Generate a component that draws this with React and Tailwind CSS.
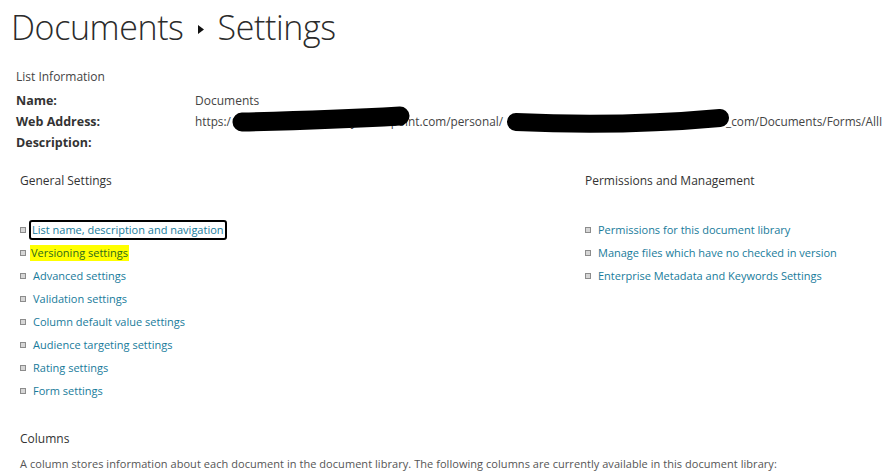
import React from 'react'

const font = { fontFamily: '"Open Sans", "Noto Sans", sans-serif' }

const generalLinks = [
  'List name, description and navigation',
  'Versioning settings',
  'Advanced settings',
  'Validation settings',
  'Column default value settings',
  'Audience targeting settings',
  'Rating settings',
  'Form settings',
]

const permissionLinks = [
  'Permissions for this document library',
  'Manage files which have no checked in version',
  'Enterprise Metadata and Keywords Settings',
]

function Bullet() {
  return <span className="inline-block w-[6px] h-[6px] border border-[#8c8c8c] bg-[#d6d6d6] shrink-0" />
}

function LinkRow({ text, i }) {
  let cls = 'px-[1px] leading-[16px] whitespace-nowrap'
  if (i === 0) cls += ' border-2 border-black rounded-[3px] -ml-[3px] px-[1px]'
  if (i === 1) cls += ' bg-[#ffff00] text-[#2d6a1c] -ml-[2px] px-[1px]'
  return (
    <li className="flex items-center gap-[6px] h-[23px]">
      <Bullet />
      <a className={cls}>{text}</a>
    </li>
  )
}

export default function App() {
  return (
    <div className="relative w-[882px] h-[472px] overflow-hidden bg-white text-[11px] text-[#444]" style={font}>
      <h1 className="flex items-center pl-[11px] pt-[2px] h-[52px] text-[34px] font-light text-[#2b2b2b] tracking-[-0.4px]">
        <span>Documents</span>
        <svg width="6" height="9" viewBox="0 0 6 9" className="ml-[14px] mr-[14px] mt-[4px]">
          <path d="M0 0 L6 4.5 L0 9 Z" fill="#111" />
        </svg>
        <span>Settings</span>
      </h1>

      <div className="pl-[16px] pt-[15px]">
        <div className="h-[20px] leading-[20px] text-[12px] text-[#444]">List Information</div>
        <div className="grid grid-cols-[179px_1fr] mt-[3px] leading-[21px] whitespace-nowrap text-[12px]">
          <div className="font-bold text-[12.5px] text-[#333]">Name:</div>
          <div>Documents</div>
          <div className="font-bold text-[12.5px] text-[#333]">Web Address:</div>
          <div className="flex overflow-hidden text-[11.8px]">
            <span className="flex justify-between w-[308px] shrink-0">
              <span>https:/</span>
              <span>y.sharepoint.com/personal/</span>
            </span>
            <span className="w-[223px] shrink-0" />
            <span>_com/Documents/Forms/AllItems.aspx</span>
          </div>
          <div className="font-bold text-[12.5px] text-[#333]">Description:</div>
          <div />
        </div>
      </div>

      <div className="grid grid-cols-[565px_1fr] pl-[20px] pt-[18px]">
        <div>
          <div className="h-[20px] leading-[20px] text-[12px] text-[#333]">General Settings</div>
          <ul className="mt-[27px] text-[#177b9b]">
            {generalLinks.map((t, i) => (
              <LinkRow key={t} text={t} i={i} />
            ))}
          </ul>
        </div>
        <div>
          <div className="h-[20px] leading-[20px] text-[12px] text-[#333]">Permissions and Management</div>
          <ul className="mt-[27px] text-[#177b9b]">
            {permissionLinks.map((t) => (
              <LinkRow key={t} text={t} i={-1} />
            ))}
          </ul>
        </div>
      </div>

      <div className="pl-[20px] pt-[27px]">
        <div className="h-[20px] leading-[20px] text-[12px] text-[#333]">Columns</div>
        <div className="mt-[5px] leading-[20px] whitespace-nowrap text-[11px] tracking-[0.05px] text-[#555]">
          A column stores information about each document in the document library. The following columns are currently available in this document library:
        </div>
      </div>

      {/* redaction marks over the web address */}
      <svg className="absolute left-0 top-0 pointer-events-none" width="882" height="472">
        <path d="M242 122 Q 330 120 400 116" stroke="#000" strokeWidth="19" strokeLinecap="round" fill="none" />
        <path d="M516 122 Q 620 127 720 118" stroke="#000" strokeWidth="18" strokeLinecap="round" fill="none" />
      </svg>
    </div>
  )
}
